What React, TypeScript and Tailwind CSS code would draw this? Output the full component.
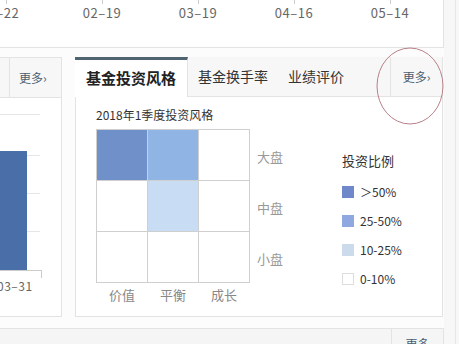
const font = { fontFamily: '"Noto Sans CJK SC", "Liberation Sans", sans-serif' };

const dates = ["01-22", "02-19", "03-19", "04-16", "05-14"];

const cells = [
  "bg-[#6f90c8]", "bg-[#90b4e4]", "bg-white",
  "bg-white", "bg-[#c8dcf4]", "bg-white",
  "bg-white", "bg-white", "bg-white",
];

const legend = [
  { label: "＞50%", cls: "bg-[#6f88c9]" },
  { label: "25-50%", cls: "bg-[#8fa8df]" },
  { label: "10-25%", cls: "bg-[#cbdbeb]" },
  { label: "0-10%", cls: "bg-white border border-[#dddddd]" },
];

const TopAxis = () => (
  <div className="h-[48px] shrink-0 border-b border-r border-[#e3e3e3] bg-white overflow-hidden">
    <div className="flex ml-[-42px]">
      {dates.map((d, i) => (
        <div key={d} className="w-[96px] flex flex-col items-center shrink-0">
          <div className="w-px h-[4px] bg-[#cccccc]" />
          <div className={`text-[13px] leading-[16px] text-[#666666] mt-[1px] tracking-[0.5px] ${i === 0 ? "mr-[12px]" : ""}`}>
            {d.replace("-", "–")}
          </div>
        </div>
      ))}
    </div>
  </div>
);

const LeftPanel = () => (
  <div className="w-[62px] border-t border-r border-b border-[#e3e3e3] bg-white flex flex-col">
    <div className="h-[40px] bg-[#f7f7f7] border-b border-[#e3e3e3] flex items-center">
      <div className="w-[10px] h-full border-r border-[#e3e3e3]" />
      <span className="ml-[9px] text-[12px] text-[#4a5f73]">更多›</span>
    </div>
    <svg width="61" height="190" className="block">
      <line x1="0" y1="16.5" x2="40" y2="16.5" stroke="#e6e6e6" />
      <line x1="0" y1="57.5" x2="40" y2="57.5" stroke="#e6e6e6" />
      <line x1="0" y1="95.5" x2="40" y2="95.5" stroke="#e6e6e6" />
      <line x1="0" y1="133.5" x2="40" y2="133.5" stroke="#e6e6e6" />
      <rect x="0" y="53" width="27" height="120" fill="#4a6ea8" />
      <line x1="0" y1="172.5" x2="41" y2="172.5" stroke="#cccccc" />
      <line x1="41.5" y1="172" x2="41.5" y2="180" stroke="#cccccc" />
    </svg>
    <div className="ml-[-3px] mt-[-11px] text-[12px] text-[#666666] tracking-[0.5px]">03–31</div>
  </div>
);

const MainPanel = () => (
  <div className="w-[368px] border border-[#e3e3e3] bg-white flex flex-col">
    <div className="h-[40px] bg-[#f7f7f7] border-b border-[#e3e3e3] flex items-stretch mt-[-1px] ml-[-1px]">
      <div className="w-[113px] bg-white border-t-[3px] border-[#4f6470] border-r border-r-[#e3e3e3] mb-[-1px] flex items-center justify-center text-[15px] font-bold text-[#222222]">
        基金投资风格
      </div>
      <div className="ml-[10px] flex items-center text-[14px] text-[#333333]">基金换手率</div>
      <div className="ml-[20px] flex items-center text-[14px] text-[#333333]">业绩评价</div>
      <div className="ml-auto w-[52px] border-l border-[#e3e3e3] flex items-center justify-center text-[12px] text-[#4a5f73]">
        更多›
      </div>
    </div>
    <div className="pl-[20px] pt-[9px] text-[12px] text-[#333333] leading-[18px]">2018年1季度投资风格</div>
    <div className="flex pl-[20px] mt-[5px]">
      <div className="flex flex-col">
        <div className="grid grid-cols-3 w-[154px] border-l border-t border-[#cfcfcf]">
          {cells.map((c, i) => (
            <div key={i} className={`h-[51px] border-r border-b border-[#cfcfcf] ${c}`} />
          ))}
        </div>
        <div className="flex text-[13px] text-[#888888] mt-[2px]">
          {["价值", "平衡", "成长"].map((t) => (
            <div key={t} className="w-[51px] text-center pl-[1px]">{t}</div>
          ))}
        </div>
      </div>
      <div className="flex flex-col ml-[7px] text-[13px] text-[#999999]">
        {["大盘", "中盘", "小盘"].map((t) => (
          <div key={t} className="h-[51px] flex items-center pt-[5px]">{t}</div>
        ))}
      </div>
      <div className="ml-[59px] flex flex-col pt-[23px]">
        <div className="text-[13px] text-[#333333] leading-[18px]">投资比例</div>
        <div className="flex flex-col gap-[16px] mt-[15px]">
          {legend.map((l) => (
            <div key={l.label} className="flex items-center h-[13px] text-[12px] text-[#333333]">
              <div className={`w-[12px] h-[12px] ${l.cls}`} />
              <span className="ml-[6px]">{l.label}</span>
            </div>
          ))}
        </div>
      </div>
    </div>
  </div>
);

export default function App() {
  return (
    <div style={font} className="relative w-[459px] h-[344px] overflow-hidden bg-white flex">
      <div className="w-[444px] flex flex-col bg-[#fcfcfc]">
        <TopAxis />
        <div className="flex shrink-0 mt-[9px] h-[260px]">
          <LeftPanel />
          <div className="w-[13px]" />
          <MainPanel />
        </div>
        <div className="mt-[11px] flex-1 min-h-0 overflow-hidden border-t border-r border-[#e3e3e3] bg-[#f5f5f5] flex">
          <div className="ml-auto w-[52px] border-l border-[#e3e3e3] flex justify-center pt-[6px] text-[12px] leading-[18px] text-[#4a5f73]">
            更多
          </div>
        </div>
      </div>
      <div className="w-[15px] bg-[#f7f7f7] flex">
        <div className="ml-[11px] w-px bg-[#e6e6e6]" />
      </div>
      <svg className="absolute left-0 top-0 pointer-events-none" width="459" height="344">
        <ellipse cx="410" cy="86" rx="33" ry="38" fill="none" stroke="#b98088" strokeWidth="1" />
      </svg>
    </div>
  );
}
